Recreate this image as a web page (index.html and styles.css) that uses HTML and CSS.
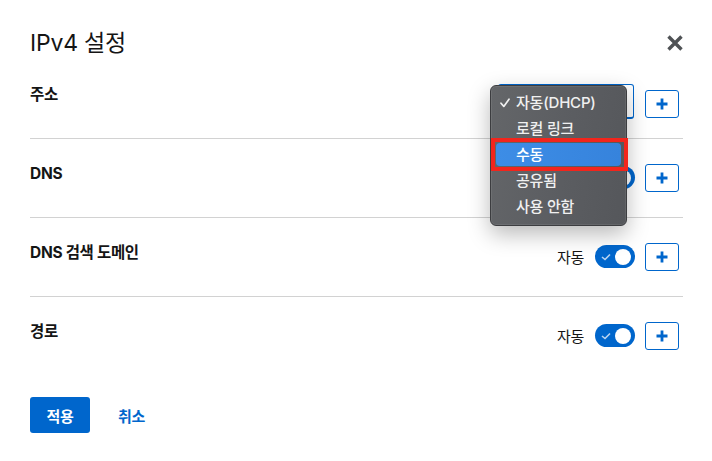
FILE: index.html
```html
<!DOCTYPE html>
<html lang="ko">
<head>
<meta charset="utf-8">
<title>IPv4 설정</title>
<link rel="stylesheet" href="styles.css">
</head>
<body>
<div class="modal">
  <header class="head">
    <h1 class="title">IPv4 설정</h1>
    <button class="close" aria-label="닫기">
      <svg width="18" height="18" viewBox="0 0 18 18"><path d="M2.5 2.5 L15.5 15.5 M15.5 2.5 L2.5 15.5" stroke="#4f5255" stroke-width="3.4" stroke-linecap="butt" fill="none"/></svg>
    </button>
  </header>

  <section class="row row-first">
    <div class="label">주소</div>
    <div class="controls controls-end">
      <div class="select-wrap">
        <div class="select"></div>
        <div class="menu">
          <div class="item checked"><svg class="check" width="10" height="10" viewBox="0 0 10 10"><path d="M1 5.2 L3.8 8.4 L9 1.2" stroke="#f0f0f0" stroke-width="1.7" fill="none" stroke-linecap="round" stroke-linejoin="round"/></svg>자동(DHCP)</div>
          <div class="item">로컬 링크</div>
          <div class="item active">수동</div>
          <div class="item">공유됨</div>
          <div class="item">사용 안함</div>
        </div>
      </div>
      <button class="add" aria-label="추가">
        <svg width="12" height="12" viewBox="0 0 12 12"><path d="M6 0.5 V11.5 M0.5 6 H11.5" stroke="#0066cc" stroke-width="2.8" fill="none"/></svg>
      </button>
    </div>
  </section>

  <section class="row">
    <div class="label">DNS</div>
    <div class="controls">
      <span class="auto">자동</span>
      <span class="toggle"><svg class="tick" width="10" height="8" viewBox="0 0 10 8"><path d="M1 4 L4 6.5 L9 1.5" stroke="#b9d3f0" stroke-width="1.6" fill="none"/></svg><span class="knob"></span></span>
      <button class="add" aria-label="추가">
        <svg width="12" height="12" viewBox="0 0 12 12"><path d="M6 0.5 V11.5 M0.5 6 H11.5" stroke="#0066cc" stroke-width="2.8" fill="none"/></svg>
      </button>
    </div>
  </section>

  <section class="row">
    <div class="label">DNS 검색 도메인</div>
    <div class="controls">
      <span class="auto">자동</span>
      <span class="toggle"><svg class="tick" width="10" height="8" viewBox="0 0 10 8"><path d="M1 4 L4 6.5 L9 1.5" stroke="#b9d3f0" stroke-width="1.6" fill="none"/></svg><span class="knob"></span></span>
      <button class="add" aria-label="추가">
        <svg width="12" height="12" viewBox="0 0 12 12"><path d="M6 0.5 V11.5 M0.5 6 H11.5" stroke="#0066cc" stroke-width="2.8" fill="none"/></svg>
      </button>
    </div>
  </section>

  <section class="row">
    <div class="label">경로</div>
    <div class="controls">
      <span class="auto">자동</span>
      <span class="toggle"><svg class="tick" width="10" height="8" viewBox="0 0 10 8"><path d="M1 4 L4 6.5 L9 1.5" stroke="#b9d3f0" stroke-width="1.6" fill="none"/></svg><span class="knob"></span></span>
      <button class="add" aria-label="추가">
        <svg width="12" height="12" viewBox="0 0 12 12"><path d="M6 0.5 V11.5 M0.5 6 H11.5" stroke="#0066cc" stroke-width="2.8" fill="none"/></svg>
      </button>
    </div>
  </section>

  <footer class="foot">
    <button class="primary">적용</button>
    <button class="link">취소</button>
  </footer>
</div>
</body>
</html>
```

FILE: styles.css
```css
* { box-sizing: border-box; }
html, body { margin: 0; padding: 0; background: #ffffff; }
body {
  font-family: "Inter", "Noto Sans CJK KR", sans-serif;
  color: #151515;
  width: 712px;
  height: 461px;
  overflow: hidden;
}
button { font-family: inherit; border: 0; background: none; padding: 0; cursor: pointer; }

.modal {
  padding: 24px 29px 0 30px;
}

.head {
  display: flex;
  align-items: center;
  justify-content: space-between;
  height: 38px;
}
.title {
  margin: 0;
  font-size: 23px;
  font-weight: 400;
  line-height: 38px;
  letter-spacing: -0.2px;
}
.close {
  width: 18px;
  height: 18px;
  margin-right: -1px;
  display: flex;
}

.row {
  display: flex;
  justify-content: space-between;
  align-items: flex-start;
  border-top: 1px solid #d2d2d2;
  padding: 24px 0 25px;
}
.row-first {
  border-top: 0;
  padding: 22px 0 19px;
}

.label {
  font-size: 15.5px;
  font-weight: 700;
  line-height: 22px;
  letter-spacing: -0.3px;
}

.controls {
  display: flex;
  align-items: center;
  margin-right: 4px;
  height: 29px;
}
.controls-end {
  align-items: flex-end;
  height: 35px;
}

.auto {
  font-size: 15px;
  margin-right: 11px;
  letter-spacing: -0.3px;
}

.toggle {
  position: relative;
  width: 40px;
  height: 23px;
  border-radius: 12px;
  background: #0066cc;
  margin-right: 10px;
  display: flex;
  align-items: center;
}
.tick {
  position: absolute;
  left: 6px;
  top: 8px;
}
.knob {
  position: absolute;
  right: 4px;
  top: 3.5px;
  width: 16px;
  height: 16px;
  border-radius: 50%;
  background: #ffffff;
}

.add {
  width: 34px;
  height: 28px;
  border: 1px solid #0066cc;
  border-radius: 3px;
  background: #fff;
  display: flex;
  align-items: center;
  justify-content: center;
}
.controls-end .add { margin-bottom: 1px; }

.select-wrap {
  position: relative;
  margin-right: 11px;
}
.select {
  width: 136px;
  height: 35px;
  border: 1px solid #0066cc;
  border-bottom-width: 2px;
  border-radius: 3px;
  background: #fff;
}

.menu {
  position: absolute;
  left: -8px;
  top: 1px;
  width: 137px;
  height: 141px;
  padding: 5px 5px 4px;
  border-radius: 6px;
  border: 1px solid #3c3d40;
  background: linear-gradient(100deg, #646669 0%, #5b5d61 55%, #55575b 100%);
  box-shadow: 0 8px 22px rgba(0, 0, 0, 0.28), inset 0 0 0 1px rgba(255,255,255,0.08);
  z-index: 10;
}
.item {
  position: relative;
  height: 23px;
  margin-bottom: 3px;
  padding-left: 20px;
  font-size: 15px;
  font-weight: 500;
  line-height: 23px;
  color: #f0f0f0;
  border-radius: 4px;
  letter-spacing: -0.2px;
  white-space: nowrap;
}
.check {
  position: absolute;
  left: 4px;
  top: 7px;
}
.item.active {
  background: linear-gradient(90deg, #3d8de6, #3683dc);
  color: #ffffff;
}
.item.active::after {
  content: "";
  position: absolute;
  left: -5px;
  right: -7px;
  top: -5px;
  bottom: -5px;
  border: 4px solid #f2251c;
}

.foot {
  display: flex;
  align-items: center;
  padding-top: 22px;
}
.primary {
  width: 60px;
  height: 36px;
  border-radius: 3px;
  background: #0066cc;
  color: #ffffff;
  font-size: 15px;
  font-weight: 600;
  letter-spacing: -0.3px;
}
.link {
  margin-left: 28px;
  color: #0066cc;
  font-size: 15px;
  font-weight: 600;
  letter-spacing: -0.3px;
}
```
